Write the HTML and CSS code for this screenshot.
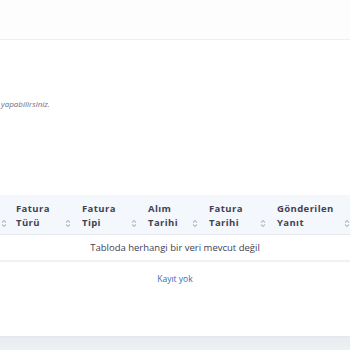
FILE: index.html
```html
<!DOCTYPE html>
<html lang="tr">

<head>
    <meta charset="UTF-8">
    <meta name="viewport" content="width=device-width, initial-scale=1.0">
    <title>Faturalar</title>
    <link rel="stylesheet" href="styles.css">
</head>

<body>

    <div class="topbar"></div>

    <div class="content">
        <p class="hint">yapabilirsiniz.</p>

        <div class="table">
            <div class="thead">
                <div class="th th-first"><span class="sort"><svg width="6" height="9" viewBox="0 0 6 9"><path d="M1 3.5 L3 1.5 L5 3.5" /><path d="M1 5.5 L3 7.5 L5 5.5" /></svg></span></div>
                <div class="th w66"><span class="label">Fatura<br>Türü</span><span class="sort"><svg width="6" height="9" viewBox="0 0 6 9"><path d="M1 3.5 L3 1.5 L5 3.5" /><path d="M1 5.5 L3 7.5 L5 5.5" /></svg></span></div>
                <div class="th w66"><span class="label">Fatura<br>Tipi</span><span class="sort"><svg width="6" height="9" viewBox="0 0 6 9"><path d="M1 3.5 L3 1.5 L5 3.5" /><path d="M1 5.5 L3 7.5 L5 5.5" /></svg></span></div>
                <div class="th w61"><span class="label">Alım<br>Tarihi</span><span class="sort"><svg width="6" height="9" viewBox="0 0 6 9"><path d="M1 3.5 L3 1.5 L5 3.5" /><path d="M1 5.5 L3 7.5 L5 5.5" /></svg></span></div>
                <div class="th w68"><span class="label">Fatura<br>Tarihi</span><span class="sort"><svg width="6" height="9" viewBox="0 0 6 9"><path d="M1 3.5 L3 1.5 L5 3.5" /><path d="M1 5.5 L3 7.5 L5 5.5" /></svg></span></div>
                <div class="th w84"><span class="label">Gönderilen<br>Yanıt</span><span class="sort"><svg width="6" height="9" viewBox="0 0 6 9"><path d="M1 3.5 L3 1.5 L5 3.5" /><path d="M1 5.5 L3 7.5 L5 5.5" /></svg></span></div>
            </div>
            <div class="empty-row">Tabloda herhangi bir veri mevcut değil</div>
        </div>

        <div class="info">
            <a href="#" class="info-link">Kayıt yok</a>
        </div>
    </div>

    <div class="footer"></div>

</body>

</html>
```

FILE: styles.css
```css
* {
    margin: 0;
    padding: 0;
    box-sizing: border-box;
}

html,
body {
    height: 350px;
    overflow: hidden;
}

body {
    background-color: #ffffff;
    font-family: 'Open Sans', 'Noto Sans', sans-serif;
    color: #3f4254;
    display: flex;
    flex-direction: column;
}

.topbar {
    height: 40px;
    background-color: #fdfdfd;
    border-bottom: 1px solid #eff0f2;
}

.content {
    flex: 1;
    display: flex;
    flex-direction: column;
}

.hint {
    margin-top: 58px;
    padding-left: 1px;
    font-size: 8px;
    font-style: italic;
    line-height: 12px;
    color: #6c6f80;
}

.table {
    margin-top: 85px;
}

.thead {
    display: flex;
    background-color: #f4f8fc;
    border-bottom: 1px solid #e6eaf0;
    overflow: hidden;
    white-space: nowrap;
}

.th {
    flex: none;
    display: flex;
    align-items: flex-end;
    justify-content: space-between;
    padding: 7px 5px 4px 6px;
}

.th-first {
    width: 10px;
    padding-left: 0;
    padding-right: 0;
    justify-content: flex-start;
}

.th-first .sort {
    margin-left: 1px;
}

.w66 {
    width: 66px;
}

.w61 {
    width: 61px;
}

.w68 {
    width: 68px;
}

.w84 {
    width: 84px;
}

.label {
    font-size: 9.5px;
    font-weight: 700;
    line-height: 14px;
    letter-spacing: 0.4px;
    color: #3f4254;
}

.sort {
    flex: none;
    display: flex;
    width: 6px;
    height: 14px;
    align-items: center;
}

.sort svg {
    display: block;
}

.sort path {
    fill: none;
    stroke: #b9bec8;
    stroke-width: 1.1;
}

.empty-row {
    height: 27px;
    border-bottom: 2px solid #f1f2f4;
    text-align: center;
    font-size: 9.5px;
    line-height: 26px;
    color: #3f4254;
}

.info {
    margin-top: 8px;
    text-align: center;
    line-height: 12px;
}

.info-link {
    font-size: 8.5px;
    color: #2f6fb8;
    text-decoration: none;
}

.footer {
    height: 14px;
    background: linear-gradient(#e8ebef, #eef1f4);
    border-top: 1px solid #e4e7eb;
}
```
